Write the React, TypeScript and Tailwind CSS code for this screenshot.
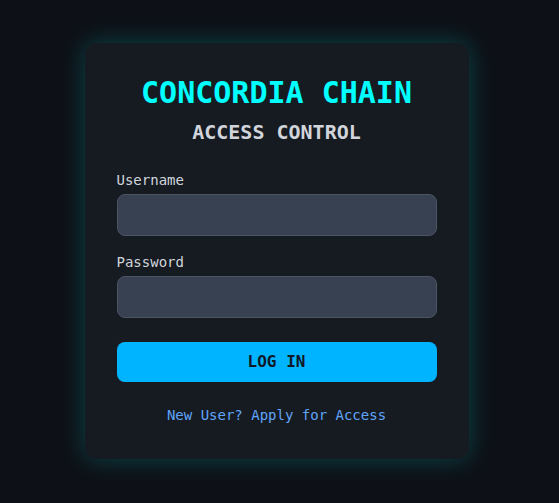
import React from "react";

export default function App() {
  return (
    <div
      className="min-h-screen w-full flex items-center justify-center bg-[#0d1117]"
      style={{ fontFamily: '"DejaVu Sans Mono", "Liberation Mono", monospace' }}
    >
      <div className="w-[384px] rounded-xl bg-[#161b22] p-8 shadow-[0_0_24px_rgba(0,255,255,0.22)] mr-[6px] mb-[2px]">
        <h1 className="text-center text-[30px] leading-9 font-bold text-[#00ffff]">
          CONCORDIA CHAIN
        </h1>
        <h2 className="mt-[7px] text-center text-xl leading-7 font-bold text-[#d1d5db]">
          ACCESS CONTROL
        </h2>
        <div className="mt-6">
          <label className="block text-sm leading-5 text-[#d1d5db] mb-1">Username</label>
          <input
            type="text"
            className="block w-full h-[42px] rounded-lg border border-[#4b5563] bg-[#374151] px-3 text-white outline-none"
          />
        </div>
        <div className="mt-4">
          <label className="block text-sm leading-5 text-[#d1d5db] mb-1">Password</label>
          <input
            type="password"
            className="block w-full h-[42px] rounded-lg border border-[#4b5563] bg-[#374151] px-3 text-white outline-none"
          />
        </div>
        <button className="mt-6 block w-full h-10 rounded-lg bg-[#00b4ff] text-base font-bold text-[#111827]">
          LOG IN
        </button>
        <div className="mt-[21px] text-center">
          <a className="text-sm leading-5 text-[#60a5fa]">New User? Apply for Access</a>
        </div>
      </div>
    </div>
  );
}
